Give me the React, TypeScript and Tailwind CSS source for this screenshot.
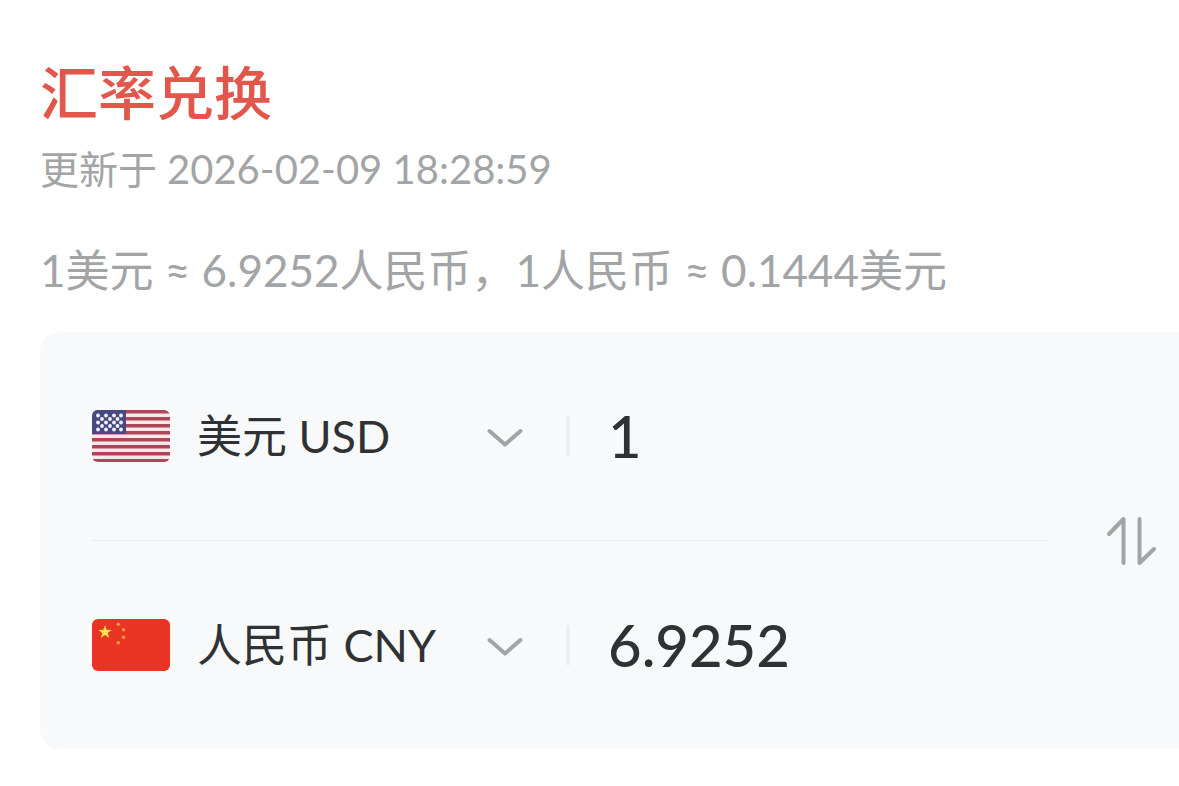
import { useState } from "react";

const RATE = 6.9252;

const STARS: [number, number][] = [
  [6, 5.5], [14, 5.5], [22, 5.5], [29, 5.5],
  [10, 9], [18, 9], [25.5, 9],
  [6, 12.5], [14, 12.5], [22, 12.5], [29, 12.5],
  [10, 16], [18, 16], [25.5, 16],
  [6, 19.5], [14, 19.5], [22, 19.5], [29, 19.5],
];

function UsFlag() {
  return (
    <svg viewBox="0 0 78 52" className="h-[52px] w-[78px] shrink-0 rounded-md" aria-hidden="true">
      <rect width="78" height="52" fill="#fbe9ea" />
      {[0, 7, 14, 21, 28, 35, 42, 49].map((y) => (
        <rect key={y} y={y} width="78" height="3.5" fill="#ad4656" />
      ))}
      <rect width="34" height="24" fill="#474a80" />
      {STARS.map(([x, y]) => (
        <circle key={`${x}-${y}`} cx={x} cy={y} r="1.9" fill="#eef0fb" />
      ))}
    </svg>
  );
}

function CnFlag() {
  return (
    <svg viewBox="0 0 78 52" className="h-[52px] w-[78px] shrink-0 rounded-md" aria-hidden="true">
      <rect width="78" height="52" fill="#e93323" />
      <path
        d="M13 6l1.7 4.8 5.1.1-4.1 3.1 1.5 4.9-4.2-2.9-4.2 2.9 1.5-4.9-4.1-3.1 5.1-.1z"
        fill="#fbe14b"
      />
      <circle cx="26.3" cy="5.3" r="1.8" fill="#f39a3c" />
      <circle cx="31.5" cy="10.7" r="1.8" fill="#f39a3c" />
      <circle cx="31.5" cy="18.3" r="1.8" fill="#f39a3c" />
      <circle cx="26.3" cy="23.7" r="1.8" fill="#f39a3c" />
    </svg>
  );
}

const CURRENCIES = { USD: "美元 USD", CNY: "人民币 CNY" };
type Code = keyof typeof CURRENCIES;

function convert(value: string, from: Code) {
  const n = Number(value);
  if (!value || Number.isNaN(n)) return "";
  return String(Number((from === "USD" ? n * RATE : n / RATE).toFixed(4)));
}

interface RowProps {
  code: Code;
  value: string;
  onCode: () => void;
  onValue: (value: string) => void;
}

function CurrencyRow({ code, value, onCode, onValue }: RowProps) {
  return (
    <div className="flex h-52 items-center">
      {code === "USD" ? <UsFlag /> : <CnFlag />}
      <div className="relative ml-[27px] w-[328px] shrink-0">
        <select
          aria-label="币种"
          value={code}
          onChange={onCode}
          className="block w-full appearance-none bg-transparent text-[45px] leading-[60px] text-[#303133] outline-none"
        >
          <option value="USD">{CURRENCIES.USD}</option>
          <option value="CNY">{CURRENCIES.CNY}</option>
        </select>
        <svg
          viewBox="0 0 36 20"
          className="pointer-events-none absolute top-[22px] right-[2px] h-5 w-9"
          fill="none"
          stroke="#a2a4a6"
          strokeWidth="4"
          strokeLinecap="round"
          strokeLinejoin="round"
          aria-hidden="true"
        >
          <path d="M2.5 3L18 16.500L33.500 3" />
        </svg>
      </div>
      <div className="ml-[41px] h-10 w-1 shrink-0 bg-[#eeeff1]" />
      <input
        aria-label={`${CURRENCIES[code]} 金额`}
        inputMode="decimal"
        value={value}
        onChange={(e) => onValue(e.target.value)}
        className="ml-[38px] min-w-0 flex-1 bg-transparent text-[58px] leading-[72px] font-medium text-[#303133] outline-none"
      />
    </div>
  );
}

export default function App() {
  const [top, setTop] = useState<Code>("USD");
  const [amounts, setAmounts] = useState({ top: "1", bottom: "6.9252" });
  const bottom: Code = top === "USD" ? "CNY" : "USD";

  const swap = () => {
    setTop(bottom);
    setAmounts({ top: amounts.top, bottom: convert(amounts.top, bottom) });
  };

  return (
    <main className="min-h-screen bg-white pt-[55px] pb-9 pl-10 font-['Lato','Noto_Sans_CJK_SC',sans-serif]">
      <h1 className="text-[58px] leading-[76px] font-medium text-[#e2574c]">汇率兑换</h1>
      <p className="mt-2 text-[39px] leading-[60px] text-[#a2a4a6]">
        更新于 <time className="text-[40px]">2026-02-09 18:28:59</time>
      </p>
      <p className="mt-[35px] text-[44px] leading-[72px] text-[#a2a4a6]">
        1美元 ≈ 6.9252人民币，1人民币 ≈ 0.1444美元
      </p>
      <section className="mt-[26px] flex items-center rounded-l-[20px] bg-[#f7f9fb] pl-[52px]">
        <div className="min-w-0 flex-1">
          <CurrencyRow
            code={top}
            value={amounts.top}
            onCode={swap}
            onValue={(v) => setAmounts({ top: v, bottom: convert(v, top) })}
          />
          <div className="h-px bg-[#eaecee]" />
          <CurrencyRow
            code={bottom}
            value={amounts.bottom}
            onCode={swap}
            onValue={(v) => setAmounts({ top: convert(v, bottom), bottom: v })}
          />
        </div>
        <button type="button" aria-label="交换币种" onClick={swap} className="mr-[21px] ml-[55px] p-px">
          <svg
            viewBox="0 0 52 52"
            className="size-[52px]"
            fill="none"
            stroke="#a2a4a6"
            strokeWidth="4"
            strokeLinecap="round"
            strokeLinejoin="round"
            aria-hidden="true"
          >
            <path d="M4 19L18.500 4V48M34.500 4V48L49 34" />
          </svg>
        </button>
      </section>
    </main>
  );
}
